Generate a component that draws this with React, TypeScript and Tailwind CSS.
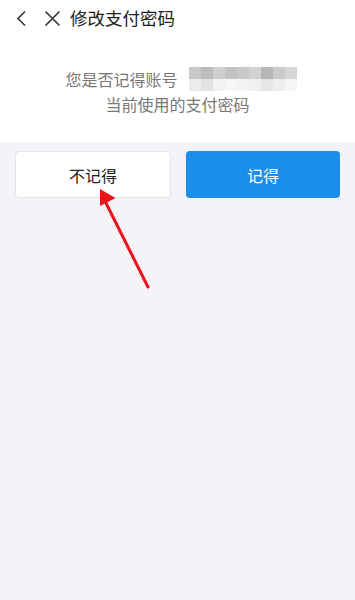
export default function App() {
  return (
    <div
      className="relative flex min-h-[600px] w-full flex-col bg-[#f3f3f8]"
      style={{ fontFamily: '"Noto Sans CJK SC", "Noto Sans", sans-serif' }}
    >
      <div className="flex flex-col bg-white pb-[26px]">
        <div className="flex h-[36px] items-center pl-[14px]">
          <svg width="16" height="17" viewBox="0 0 16 17" className="text-[#333]">
            <path d="M11 1.5 L4 8.5 L11 15.5" fill="none" stroke="currentColor" strokeWidth="1.6" />
          </svg>
          <svg width="17" height="17" viewBox="0 0 17 17" className="ml-[14px] text-[#333]">
            <path d="M1.5 1.5 L15.5 15.5 M15.5 1.5 L1.5 15.5" fill="none" stroke="currentColor" strokeWidth="1.6" />
          </svg>
          <span className="ml-[9px] text-[17.5px] leading-none text-[#222]">修改支付密码</span>
        </div>
        <div className="mt-[31px] flex flex-col items-center text-[16px] leading-[24px] text-[#777]">
          <div className="flex items-center pl-[7px]">
            <span>您是否记得账号</span>
            <div className="ml-[11px] grid h-[24px] w-[108px] grid-cols-9 grid-rows-2">
              <div className="bg-[#c8c8c8]" />
              <div className="bg-[#bcbcbc]" />
              <div className="bg-[#cfcfcf]" />
              <div className="bg-[#c2c2c2]" />
              <div className="bg-[#c9c9c9]" />
              <div className="bg-[#d2d2d2]" />
              <div className="bg-[#b6b6b6]" />
              <div className="bg-[#cbcbcb]" />
              <div className="bg-[#d6d6d6]" />
              <div className="bg-[#ececec]" />
              <div className="bg-[#e2e2e2]" />
              <div className="bg-[#f2f2f2]" />
              <div className="bg-[#f7f7f7]" />
              <div className="bg-[#f4f4f4]" />
              <div className="bg-[#f0f0f0]" />
              <div className="bg-[#e6e6e6]" />
              <div className="bg-[#eeeeee]" />
              <div className="bg-[#f5f5f5]" />
            </div>
          </div>
          <span className="mt-[1px]">当前使用的支付密码</span>
        </div>
      </div>
      <div className="mt-[9px] flex gap-[15px] px-[15px]">
        <button className="flex h-[47px] flex-1 items-center justify-center rounded-[4px] border border-[#e3e3e8] bg-white text-[16px] text-[#222]">
          不记得
        </button>
        <button className="flex h-[47px] flex-1 items-center justify-center rounded-[4px] bg-[#1a8eea] text-[16px] text-white">
          记得
        </button>
      </div>
      <svg
        className="absolute left-0 top-0"
        width="355"
        height="600"
        viewBox="0 0 355 600"
      >
        <path d="M148 287 L105 201" stroke="#e8131b" strokeWidth="3" strokeLinecap="round" />
        <path d="M100 189 L115.5 198 L100 206 Z" fill="#e8131b" />
      </svg>
    </div>
  );
}
